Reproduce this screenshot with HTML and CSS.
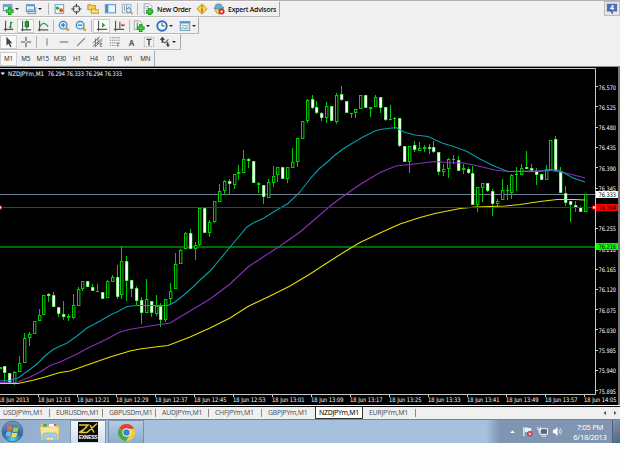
FILE: index.html
```
<!DOCTYPE html>
<html lang="en">
<head>
  <meta charset="UTF-8" />
  <meta name="viewport" content="width=device-width, initial-scale=1.0"/>
  <title>NZDJPYm,M1</title>
  <link rel="stylesheet" href="styles.css">
</head>
<body>
  <div class="desktop">

    <!-- Toolbars -->
    <div class="toolbars">
      <div class="toolbar-top">
        <div class="toolbar">
          <span class="ic drop"><svg viewBox="0 0 14 14"><rect x="1.5" y="2" width="10" height="7" fill="#d9ebf8" stroke="#5484b0"/><path d="M2 3.5h9" stroke="#5d9bd0" stroke-width="2"/><path d="M9 5v9M4.500 9.500h9" stroke="#138a1b" stroke-width="4"/><path d="M9 6v7M5.500 9.500h7" stroke="#38d83d" stroke-width="2"/></svg></span>
          <span class="ic drop"><svg viewBox="0 0 14 14"><rect x="3.500" y="5.500" width="9" height="7" fill="#d6e7f5" stroke="#5d8dbd"/><rect x="1.500" y="2" width="9.500" height="8" fill="#e5f1fa" stroke="#4d82b5"/><path d="M2 3h9M3 8h7" stroke="#5b98cd" stroke-width="1.500"/></svg></span>
          <span class="sep"></span>
          <span class="ic"><svg viewBox="0 0 14 14"><rect x="2.500" y="2" width="10" height="10" fill="#fff" stroke="#4c8bca"/><path d="M5 4v4M3.500 6h4" stroke="#27a32f" stroke-width="2"/><circle cx="9.500" cy="8.500" r="2.300" fill="#e7502b"/></svg></span>
          <span class="ic"><svg viewBox="0 0 14 14"><circle cx="7.500" cy="7" r="3.800" fill="none" stroke="#555" stroke-width="1.300"/><path d="M7.500 1v4M7.500 9v4M1.500 7h4M9.500 7h4" stroke="#444" stroke-width="1.300"/></svg></span>
          <span class="ic"><svg viewBox="0 0 14 14"><path d="M1 2h4l1 1h4v5H1z" fill="#f5cf4d" stroke="#b6902d"/><path d="M5 7h4l1 1h4v4H5z" fill="#ffe06b" stroke="#b6902d"/></svg></span>
          <span class="ic"><svg viewBox="0 0 14 14"><rect x="1.500" y="2" width="12" height="9.500" fill="#eaf4fb" stroke="#4681ba"/><path d="M3.500 2v9" stroke="#498bca" stroke-width="3"/></svg></span>
          <span class="ic"><svg viewBox="0 0 14 14"><rect x="1.500" y="1.500" width="10" height="10" fill="#edf3f8" stroke="#94a7b8"/><path d="M4 3v6M6.500 2v5M9 4v5" stroke="#78909f"/><circle cx="9" cy="8.500" r="2.700" fill="#cfeafd" stroke="#4684be"/><path d="M11 10.500l2.500 2.500" stroke="#d6a02e" stroke-width="2"/></svg></span>
          <span class="sep"></span>
          <span class="ic"><svg viewBox="0 0 14 14"><path d="M2.500 1h6l3 3v8h-9z" fill="#f9fbfc" stroke="#899"/><path d="M4 4h4M4 6h5" stroke="#879aad"/><path d="M9 6v8M5 10h8" stroke="#128b1a" stroke-width="4"/><path d="M9 7v6M6 10h6" stroke="#38d83d" stroke-width="2"/></svg></span>
          <span class="tool-text order">New Order</span>
          <span class="ic"><svg viewBox="0 0 14 14"><path d="M7 1l6 6-6 6-6-6z" fill="#f8d444" stroke="#bd8f20"/><path d="M7 3v2M7 6v5" stroke="#7b571a" stroke-width="1.300"/></svg></span>
          <span class="ic"><svg viewBox="0 0 14 14"><path d="M2 6q1 6 5 7 5-2 5-7z" fill="#f7cf59" stroke="#b88b30"/><path d="M1 6q2-1 2-4 4-2.500 7 0 0 3 3 3-5 4-12 1z" fill="#61acd6" stroke="#3a7faa" stroke-width=".6"/><circle cx="10" cy="10" r="3.500" fill="#dc2828"/><rect x="8.800" y="8.800" width="2.400" height="2.400" fill="#fff"/></svg></span>
          <span class="tool-text">Expert Advisors</span>
        </div>
        <div class="news"><svg viewBox="0 0 14 14"><path d="M1 1h12v9H8v4l-3-4H1z" fill="#4b70b6"/><text x="7" y="8.500" text-anchor="middle" font-size="8" font-weight="bold" fill="#fff">4</text></svg></div>
      </div>

      <div class="toolbar charts-bar">
        <span class="ic"><svg viewBox="0 0 14 14"><path d="M3 1v12M1 11h11" stroke="#555" stroke-width="1.300"/><path d="M9 2v8M7 8h2M9 3h2" stroke="#258b32" stroke-width="1.500"/></svg></span>
        <span class="ic pressed"><svg viewBox="0 0 14 14"><path d="M3 1v12M1 11.500h12" stroke="#555" stroke-width="1.300"/><path d="M8 0v11" stroke="#176d22"/><rect x="6" y="2" width="4" height="6" fill="#1aa72a" stroke="#176d22"/></svg></span>
        <span class="ic"><svg viewBox="0 0 14 14"><path d="M3 1v12M1 11.500h12" stroke="#555" stroke-width="1.300"/><path d="M3 8q5-8 10 0" fill="none" stroke="#3b9b49" stroke-width="1.300"/></svg></span>
        <span class="sep"></span>
        <span class="ic"><svg viewBox="0 0 14 14"><path d="M8.500 8.500l4 4" stroke="#d6a62e" stroke-width="3"/><circle cx="6" cy="6" r="4.500" fill="#d9effe" stroke="#3c83c4" stroke-width="1.400"/><path d="M6 3.500v5M3.500 6h5" stroke="#2c77b9" stroke-width="1.400"/></svg></span>
        <span class="ic"><svg viewBox="0 0 14 14"><path d="M8.500 8.500l4 4" stroke="#d6a62e" stroke-width="3"/><circle cx="6" cy="6" r="4.500" fill="#d9effe" stroke="#3c83c4" stroke-width="1.400"/><path d="M3.500 6h5" stroke="#2c77b9" stroke-width="1.400"/></svg></span>
        <span class="sep"></span>
        <span class="ic pressed"><svg viewBox="0 0 14 14"><path d="M3 1v12M1 11h12" stroke="#555" stroke-width="1.300"/><path d="M7 3v6l4-3z" fill="#2ba63a"/></svg></span>
        <span class="ic"><svg viewBox="0 0 14 14"><path d="M3 1v12M1 11h12M8 2v8" stroke="#555" stroke-width="1.300"/><path d="M9 6l3-2v4z" fill="#c84724"/><path d="M10 6h4" stroke="#c84724" stroke-width="1.300"/></svg></span>
        <span class="sep"></span>
        <span class="ic drop"><svg viewBox="0 0 14 14"><path d="M1.500 1h6l3 3v7h-9z" fill="#f4f7f8" stroke="#8b9a9a"/><path d="M5 3v6" stroke="#555"/><path d="M9 5v9M4.500 9.500h9" stroke="#128b1a" stroke-width="4"/><path d="M9 6v7M5.500 9.500h7" stroke="#38d83d" stroke-width="2"/></svg></span>
        <span class="ic drop"><svg viewBox="0 0 14 14"><circle cx="7" cy="7" r="5.500" fill="#eef8ff" stroke="#2870bd" stroke-width="2.200"/><path d="M7 3.500V7h3" fill="none" stroke="#333"/></svg></span>
        <span class="ic drop"><svg viewBox="0 0 14 14"><rect x="1.500" y="2" width="11" height="10" fill="#eef6fc" stroke="#4884bd"/><path d="M1 3h12" stroke="#4c91d0" stroke-width="2"/><path d="M3 7l2-1 3 1 3-1" fill="none" stroke="#bb8746"/><path d="M3 10l2-1 3 1 3-1" fill="none" stroke="#47995c"/></svg></span>
      </div>

      <div class="toolbar lines-bar">
        <span class="ic pressed"><svg viewBox="0 0 14 14"><path d="M4 1v10l2.500-2 2 4 1.500-1-2-3.500h3z" fill="#444"/></svg></span>
        <span class="ic"><svg viewBox="0 0 14 14"><path d="M7 1v5M7 8v5M1 7h5M8 7h5" stroke="#555" stroke-width="1.300"/></svg></span>
        <span class="sep"></span>
        <span class="ic"><svg viewBox="0 0 14 14"><path d="M7 3v8" stroke="#777" stroke-width="1.200"/></svg></span>
        <span class="ic"><svg viewBox="0 0 14 14"><path d="M2 7h10" stroke="#666" stroke-width="1.200"/></svg></span>
        <span class="ic"><svg viewBox="0 0 14 14"><path d="M2.500 11.500l9-9" stroke="#777" stroke-width="1.200"/></svg></span>
        <span class="ic"><svg viewBox="0 0 14 14"><path d="M1 8l8-7M1 12l11-9M3 13l9-8M4 3v9M7 2v8" stroke="#666"/><text x="9" y="13" font-size="5.500" fill="#333">E</text></svg></span>
        <span class="ic"><svg viewBox="0 0 14 14"><path d="M1 2h12M1 5h12M1 8h12M1 11h7" stroke="#777" stroke-dasharray="1.500 1"/><text x="9" y="13" font-size="5.500" fill="#333">F</text></svg></span>
        <span class="ic letter">A</span>
        <span class="ic"><svg viewBox="0 0 14 14"><rect x="1.500" y="1.500" width="11" height="11" fill="none" stroke="#999" stroke-dasharray="1 1"/><path d="M4 4h6M7 4v7" stroke="#444" stroke-width="1.600"/></svg></span>
        <span class="ic drop"><svg viewBox="0 0 14 14"><path d="M1 4l3-3 3 3-2 1v3H3V5zM8 10h1V7h2v3h2l-2.500 3z" fill="#444"/><path d="M5 7l2 1 4-4" fill="none" stroke="#555" stroke-width="1.300"/></svg></span>
      </div>

      <div class="toolbar periods">
        <span class="pressed">M1</span><span>M5</span><span>M15</span><span>M30</span><span>H1</span><span>H4</span><span>D1</span><span>W1</span><span>MN</span>
      </div>
    </div>

    <!-- Chart window -->
    <div class="chart">
      <svg id="chart" width="619" height="338" viewBox="0 67 619 338"></svg>
    </div>

    <!-- Chart tabs -->
    <div class="tabs">
      <span class="tab first">USDJPYm,M1</span>
      <span class="tab">EURUSDm,M1</span>
      <span class="tab">GBPUSDm,M1</span>
      <span class="tab">AUDJPYm,M1</span>
      <span class="tab">CHFJPYm,M1</span>
      <span class="tab last">GBPJPYm,M1</span>
      <span class="tab current">NZDJPYm,M1</span>
      <span class="tab">EURJPYm,M1</span>
      <svg class="tab-scroll" viewBox="0 0 14 6"><path d="M3 1v4L0.500 3zM11 1v4l2.500-2z" fill="#555"/></svg>
    </div>

    <!-- Taskbar -->
    <div class="taskbar">
      <svg class="start" viewBox="0 0 24 24">
        <defs><radialGradient id="orb" cx=".5" cy=".9" r=".9"><stop offset="0" stop-color="#5fd0ee"/><stop offset=".5" stop-color="#27679f"/><stop offset="1" stop-color="#7f9cba"/></radialGradient></defs>
        <circle cx="12" cy="12" r="10.800" fill="url(#orb)" stroke="#3b5f85" stroke-width=".8"/>
        <path d="M7 7q2-1.500 5 0l-1 4.500q-3-1.300-5 0z" fill="#ee6b35"/>
        <path d="M13 7.300q3 1.400 5.500 0l-1.200 4.600q-2.500 1.300-5.300 0z" fill="#98cc4b"/>
        <path d="M5.700 12.500q2.300-1.300 5 0L9.500 17q-2.500-1.300-5 0z" fill="#6ebbed"/>
        <path d="M11.800 13q2.700 1.300 5.300 0L16 17.500q-2.700 1.500-5.400 0z" fill="#fbd447"/>
      </svg>
      <svg class="explorer" viewBox="0 0 22 20">
        <path d="M2 2h6l1 2h11v14H2z" fill="#e9c663"/>
        <path d="M4 2h4v3H4z" fill="#4cab56"/><path d="M10 2h7v3h-7z" fill="#f7f8f2"/><path d="M15 2h2v2h-2z" fill="#d2573e"/>
        <path d="M1 5h19l-1 13H3z" fill="#f8e59b" stroke="#dbb958" stroke-width=".6"/>
        <path d="M4 19v-6q0-2 2-2h10q2 0 2 2v6h-3v-4H7v4z" fill="#9bd1ea" stroke="#6da9cb" stroke-width=".6"/>
      </svg>
      <div class="task active">
        <div class="exness">
          <svg viewBox="0 0 20 12"><path d="M1 3h9L3 10.500h6M9 10.500L19 1.500M12 3l4 7.500M1 10.500L9 5" fill="none" stroke="#e4c632" stroke-width="1.500"/></svg>
          <span>EXNESS</span>
        </div>
      </div>
      <div class="task">
        <svg class="chrome" viewBox="0 0 20 20">
          <circle cx="10" cy="10" r="9" fill="#f6cf38"/>
          <path d="M10 10L2.200 5.500A9 9 0 0 1 18 6H10z" fill="#db4437"/>
          <path d="M10 10L2.200 5.500A9 9 0 0 0 9.500 19L13.500 12z" fill="#46a650"/>
          <circle cx="10" cy="10" r="4.400" fill="#fff"/><circle cx="10" cy="10" r="3.400" fill="#3f7fd0"/>
        </svg>
      </div>
      <div class="tray">
        <svg viewBox="0 0 12 12"><path d="M3.500 7.500L6 5l2.500 2.500z" fill="#fff"/></svg>
        <svg viewBox="0 0 12 12"><path d="M2 1v10" stroke="#fff" stroke-width="1.200"/><path d="M3 2q2-1 3.500 0T10 2v5q-2 1-3.500 0T3 7z" fill="#eef2f6"/><circle cx="8.500" cy="8.500" r="3" fill="#d8343a"/><path d="M7.300 7.300l2.400 2.400M9.700 7.300L7.300 9.700" stroke="#fff"/></svg>
        <svg viewBox="0 0 12 12"><rect x="3.500" y="3" width="8" height="6" fill="#50657f" stroke="#fff"/><path d="M5 11h5M1 1v3h3V1M2.500 4v4" fill="none" stroke="#fff"/></svg>
        <svg viewBox="0 0 12 12"><path d="M1 4h2l3-3v10L3 8H1z" fill="#fff"/><path d="M7.500 4q1.500 2 0 4M9 2.500q3 3.500 0 7" fill="none" stroke="#e4e9ef"/></svg>
        <div class="clock">7:05 PM<br>6/18/2013</div>
      </div>
      <div class="show-desktop"></div>
    </div>
  </div>

  <script src="chart.js"></script>
</body>
</html>
```
FILE: chart.js
```
// [high, body top, body bottom, low, up]
const candles = [
  [366.5,366.7,369,369,1],[366,366,373.3,383,0],[373.3,373.3,383,383,0],[371,372,383,385,1],[356,362.7,371.7,371.7,1],
  [333,338,363.3,363.3,1],[332,333.7,338,346,1],[321,321,333.7,333.7,1],[309,314.7,320.7,320.7,1],[295.3,295.3,314.7,314.7,1],
  [293,294,296,301.7,0],[292,295,306.7,306.7,0],[307.3,307.3,313.7,317,0],[301.3,314.3,317,320,0],[314,316.3,318,321,1],
  [294,305,317.7,318.5,1],[287.3,289.3,305.7,306.3,1],[281.3,281.3,288.7,290.7,1],[281.3,281.3,287,287,0],[284,287,291,291,0],
  [284,291,291.7,291.7,0],[292,292,298.7,298.7,0],[280,281.3,298.3,298.3,1],[275,277.3,282.3,282.3,1],[265,277.3,296.7,299.3,0],
  [246,261.3,294.7,299.3,1],[256,261.3,281,300.7,0],[280.3,280.3,289,296.7,0],[286,288,300.7,305.3,0],[297,299.7,313.3,323.7,0],
  [279,298.7,313,313,1],[301,301,313.3,317.3,0],[295,306,314,316,1],[303.3,306,320.3,326.7,0],[299.3,299.3,320.3,321.5,1],
  [282.7,291,299.3,305.3,1],[253,264,289.3,289.3,1],[249,250,263.7,264.3,1],[231.7,232.7,248.5,248.5,1],[229,233,248.7,248.7,0],
  [241.7,245,248.7,260,1],[207,208,245.3,246,1],[207,208,232.7,232.7,0],[220,222.3,232.7,236.7,1],[201.3,201.3,222,223.3,1],
  [184,191,201.7,201.7,1],[180,181,191,195,1],[179.3,181,184,195,0],[174,174,184.7,188.7,1],[165,172,174.3,179.7,1],
  [150,159,173.3,173.3,1],[158,159.3,161,168,0],[161,161,182.7,182.7,0],[181.7,183,185,192.7,1],[185,185,197,203.7,0],
  [179,182.3,197.7,198.3,1],[166,176,183,187,1],[167.3,167.3,175,182.3,1],[167,167,178.7,178.7,0],[167,167.3,179.3,182.7,1],
  [148.3,162.3,167.5,167.5,1],[138.3,138.3,162,167,1],[121.3,121.3,138.7,138.7,1],[99,99.7,121,123.3,1],[95,99.3,107.7,109,0],
  [101,107.3,113,114,0],[112,112.7,117.7,121.3,0],[102,106.3,117.7,122.7,1],[106.3,106.3,121.3,121.3,0],[93.3,95,121.7,124.3,1],
  [86.3,93.7,100.3,101,0],[101,101,113.3,113.3,0],[113,113.3,114,118,0],[109,109,113.3,118.3,1],[95,95,109.3,109.3,1],
  [95,95,108.3,108.3,0],[106.7,107.3,108.7,117,1],[95,97.3,107,107,1],[97,97,107.7,112.7,0],[107.3,107.3,120,121,0],
  [105,119.3,120,120,0],[117,118.3,119.3,129.3,1],[118,118,146.3,147,0],[146.3,146.3,162,162,0],[146,146,162,172.7,1],
  [140.7,145,149.7,151.7,0],[141.7,148.3,151,151,1],[145.3,147,148.5,151.7,1],[144.3,147,148.7,153.7,0],[141.3,147,152,152.5,0],
  [152.3,152.3,171.7,175,0],[164.3,168.7,172,176,1],[158.3,159.3,169,177.7,1],[155,159,160.3,163.7,0],[155.7,160.3,170.7,171,0],
  [164.3,168.3,169.7,173.7,1],[166.7,169,173,173.7,0],[166,173,204.7,205,0],[187.3,187.3,205.3,211.7,1],[183,183.3,187.7,202.3,1],
  [183.3,183.3,191,192,0],[188.7,191,204,215.7,0],[199.3,201,204.3,207.3,1],[179.3,190,200.3,200.3,1],[185.3,189.7,190.7,200,0],
  [173.7,174.7,193,199,1],[166.7,173.5,174.3,190.7,1],[164.3,168,174.7,174.7,1],[151.3,167.3,168.7,168.7,0],[163.7,168,171,171.5,0],
  [168,170.7,175,185,0],[174,174,179.7,180,0],[165,169,180,180,1],[140,140,170,170,1],[136,138.7,170.7,170.7,0],
  [166.7,170.7,192.7,192.7,0],[186,193,202.7,205.7,0],[201,201,204.7,221.7,0],[200.7,204.7,207.7,212.3,0],[206,207.3,212.3,212.3,0],
  [194,194,212.3,212.3,1]
];

const averages = {
  '#e4de00': '0,383.5 18,383.5 34,380 45,377 60,372.500 70,371 90,364 110,357 130,351 140,349 155,347 168,345.500 190,337 210,328 230,318 248,306.500 270,296 290,286 310,274 330,261 345,251.500 360,242.500 380,233 400,224 420,217.500 435,213.500 460,208.500 475,207 505,206 520,204.500 540,201.500 557,199.500 575,199.500 585,200',
  '#8b2fc0': '0,382.5 18,382 30,377 40,372 50,365.500 60,362 77,354 88,348 105,340 120,332 129,329.500 150,326 170,323 190,311 210,299 230,284 248,267 260,259 280,246 300,232 332,204.500 345,195 360,184.500 380,172.500 396,166 410,164.500 435,161.500 447,162.500 464,163 478,166 495,170 508,171.500 550,170.500 561,172 572,174.500 585,178',
  '#00a0a8': '0,381 10,380.5 18,378 27,371.500 37,364 45,356 53,349.500 67,343 77,336 87,328 100,321 112,314 117,312 127,306.500 137,305.500 168,305.500 175,302 185,294 193,287 200,280 210,271 231,246 247,227 253,223 264,218 275,211 288,203.500 299,193 312,176.500 320,168 328,161.500 335,155 343,149 351,144 363,137 375,131 380,129.500 396,127.500 404,132 415,135 428,136.500 442,143 455,147 467,151.500 480,159 494,166 508,171.500 540,171.500 550,169.500 560,170.500 573,178 585,182'
};

const STEP = 4.875;
let out = '';

// horizontal levels
out += '<path d="M0 194.500h595" stroke="#708090"/>';
out += '<path d="M0 247h595" stroke="#006c00" stroke-width="2"/>';

candles.forEach(([high, top, bottom, low, up], i) => {
  const x = Math.round(i * STEP - 0.4) + 0.5;
  const t = Math.round(top), b = Math.max(Math.round(bottom), t + 1);
  out += `<path d="M${x} ${Math.round(high)}V${t}M${x} ${b}V${Math.round(low)}" stroke="#00c800"/>`;
  if (b - t < 2) {
    out += `<path d="M${x - 1.5} ${t + 0.5}h3" stroke="#00e000"/>`;
  } else {
    out += `<rect x="${x - 1}" y="${t + 0.5}" width="2.4" height="${b - t - 1}" fill="${up ? '#000' : '#fff'}" stroke="#00d000"/>`;
    if (!up) out += `<rect x="${x - 1}" y="${t + 0.5}" width="2.3" height="${b - t - 1}" fill="#fff"/>`;
  }
});

for (const color in averages) {
  out += `<polyline points="${averages[color]}" fill="none" stroke="${color}" stroke-width="1.1"/>`;
}

out += '<path d="M0 207.500h595" stroke="#d00000"/>';
out += '<rect x="-1.500" y="206" width="3" height="3" fill="#fff" stroke="#f00"/>';
out += '<rect x="592.500" y="206" width="3" height="3" fill="#fff" stroke="#f00"/>';

// frame and scales
out += '<path d="M0 68.500h595.500V394.500H0" fill="none" stroke="#c8c8c8"/>';

function label(x, y, text, width, color) {
  return `<text x="${x}" y="${y}" textLength="${width}" lengthAdjust="spacingAndGlyphs" fill="${color}">${text}</text>`;
}

for (let i = 0; i < 16; i++) {
  const y = 87.2 + i * 20.27;
  out += `<path d="M596 ${Math.round(y) - 0.5}h2" stroke="#ccc"/>`;
  out += label(598.5, y + 2.4, (76.57 - i * 0.045).toFixed(3), 17.5, '#fff');
}

[[194.2, '76.333', '#fff', '#000'], [207.2, '76.304', '#f00', '#000'], [246.8, '76.216', '#0f0', '#000']].forEach(([y, text, bg, fg]) => {
  out += `<rect x="596" y="${Math.round(y - 3.5)}" width="22" height="7" fill="${bg}"/>`;
  out += label(598.5, y + 2.4, text, 17.5, fg);
});

const times = ['18 Jun 2013', '18 Jun 12:13', '18 Jun 12:21', '18 Jun 12:29', '18 Jun 12:37', '18 Jun 12:45', '18 Jun 12:53', '18 Jun 13:01',
  '18 Jun 13:09', '18 Jun 13:17', '18 Jun 13:25', '18 Jun 13:33', '18 Jun 13:41', '18 Jun 13:49', '18 Jun 13:57', '18 Jun 14:05'];
times.forEach((t, i) => {
  const x = i * 39 - 0.5;
  out += `<path d="M${x} 395v2" stroke="#ccc"/>`;
  out += label(i ? x - 0.5 : -2, 402, t, i ? 32.5 : 31, '#fff');
});

out += '<path d="M0.500 72.500h4.500l-2.200 2.500z" fill="#fff"/>';
out += label(8, 76, 'NZDJPYm,M1', 36, '#fff');
out += label(47.5, 76, '76.294 76.333 76.294 76.333', 74.5, '#fff');

document.getElementById('chart').innerHTML = out;
```
FILE: styles.css
```
* {
  box-sizing: border-box;
}

body {
  margin: 0;
  background: #fefefe;
  font-family: "Noto Sans", "Liberation Sans", Arial, sans-serif;
  overflow: hidden;
}

svg {
  display: block;
}

.desktop {
  width: 620px;
  height: 443px;
  display: flex;
  flex-direction: column;
}

/* Toolbars */
.toolbars {
  height: 66px;
  background: #f0f0f0;
  border-top: 1px solid #b5b1b3;
  display: flex;
  flex-direction: column;
  align-items: flex-start;
}

.toolbar-top {
  width: 100%;
  height: 16px;
  display: flex;
  justify-content: space-between;
}

.toolbar {
  display: flex;
  align-items: center;
  height: 16px;
  border-right: 1px solid #aaa;
  border-bottom: 1px solid #bbb;
  border-top: 1px solid #fbfbfb;
}

.toolbar-top .toolbar {
  width: 280px;
}

.charts-bar {
  width: 199px;
  height: 17px;
}

.lines-bar {
  width: 181px;
}

.ic {
  width: 17px;
  height: 14px;
  display: flex;
  align-items: center;
  justify-content: center;
  flex: none;
}

.ic svg {
  width: 12px;
  height: 12px;
}

.drop {
  width: 23px;
  justify-content: flex-start;
  padding-left: 2px;
}

.drop::after {
  content: "";
  margin-left: 1px;
  border: 2px solid transparent;
  border-top: 2px solid #222;
  border-bottom: 0;
}

.sep {
  width: 1px;
  height: 12px;
  margin: 0 1.5px;
  background: #b5b5b5;
  flex: none;
}

.pressed {
  background: #fafafa;
  border: 1px solid #cfcfcf;
}

.tool-text {
  font-size: 6.9px;
  font-weight: 500;
  letter-spacing: -0.2px;
  color: #000;
  white-space: nowrap;
  padding-left: 1px;
}

.order {
  width: 37px;
}

.letter {
  font-size: 8px;
  font-weight: bold;
  color: #555;
}

.news {
  width: 16px;
  height: 15px;
  padding: 1px;
  background: #e6e6e6;
  border: 1px solid #bbb;
}

.news svg {
  width: 12px;
  height: 12px;
}

.periods {
  width: 155px;
  border-bottom: 0;
}

.periods span {
  width: 17.1px;
  height: 14px;
  line-height: 14px;
  font-size: 6.3px;
  letter-spacing: -0.2px;
  color: #333;
  text-align: center;
}

.periods .pressed {
  line-height: 12px;
}

/* Chart */
.chart {
  height: 339px;
  background: #000;
  border-top: 1px solid #909090;
  border-right: 2px solid #777;
}

.chart text {
  font-family: "DejaVu Sans", sans-serif;
  font-size: 6.2px;
}

/* Tabs */
.tabs {
  height: 14px;
  background: #f0f0f0;
  border-top: 1px solid #fff;
  box-shadow: inset 0 1px 0 #111;
  display: flex;
  align-items: center;
}

.tab {
  width: 53px;
  padding-left: 6px;
  font-size: 6.9px;
  letter-spacing: -0.25px;
  line-height: 8px;
  color: #555;
  border-right: 1px solid #888;
}

.tab.first {
  width: 50px;
  padding-left: 3px;
}

.tab.last {
  border-right: 0;
}

.tab.current {
  width: 48px;
  height: 12px;
  line-height: 11px;
  padding-left: 3px;
  background: #fff;
  color: #000;
  border: 1px solid #333;
  border-top: 0;
}

.tab-scroll {
  width: 14px;
  height: 6px;
  margin-left: auto;
  margin-right: 3px;
}

/* Taskbar */
.taskbar {
  height: 24px;
  background: linear-gradient(90deg, #91abcb, #a6c1de 150px, #a6c1de 486px, #7f95b1 500px);
  border-top: 1px solid #72849a;
  display: flex;
  align-items: center;
}

.start {
  width: 23px;
  height: 23px;
  margin-left: 1px;
}

.explorer {
  width: 22px;
  height: 20px;
  margin: 0 9px 0 15px;
}

.task {
  width: 36px;
  height: 23px;
  margin-right: 2px;
  display: flex;
  align-items: center;
  justify-content: center;
  background: linear-gradient(#b5cae2, #8eaccd);
  border: 1px solid #7890ad;
  border-bottom: 0;
}

.task.active {
  background: linear-gradient(#f4f8fc, #d2deec);
  border-color: #8496ac;
}

.exness {
  width: 20px;
  height: 20px;
  background: #0b0b0b;
  color: #fff;
  font-family: "Liberation Sans", sans-serif;
  font-size: 5px;
  font-weight: bold;
  line-height: 6px;
  text-align: center;
  letter-spacing: -0.3px;
}

.exness svg {
  width: 20px;
  height: 12px;
}

.exness span {
  display: block;
}

.chrome {
  width: 19px;
  height: 19px;
}

.tray {
  margin-left: auto;
  display: flex;
  align-items: center;
  gap: 4px;
}

.tray svg {
  width: 11px;
  height: 11px;
}

.clock {
  width: 44px;
  margin-left: 1px;
  font-size: 7.6px;
  line-height: 10px;
  letter-spacing: -0.3px;
  color: #fff;
  text-align: center;
}

.show-desktop {
  width: 8px;
  height: 23px;
  background: linear-gradient(135deg, #8396ad, #4e6480);
  border-left: 1px solid #4b5f79;
}
```
